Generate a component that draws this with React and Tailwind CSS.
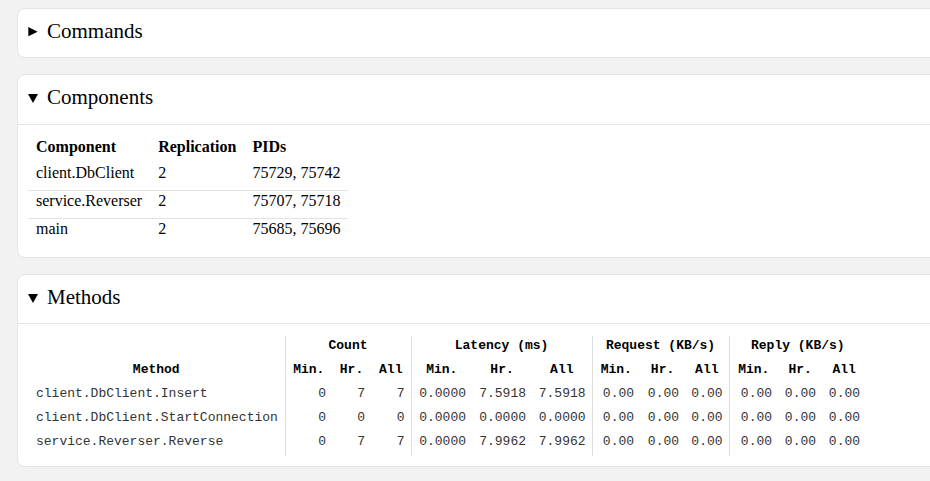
import React from 'react';

const components = [
    { name: 'client.DbClient', replication: 2, pids: '75729, 75742' },
    { name: 'service.Reverser', replication: 2, pids: '75707, 75718' },
    { name: 'main', replication: 2, pids: '75685, 75696' },
];

const methods = [
    {
        name: 'client.DbClient.Insert',
        count: ['0', '7', '7'],
        latency: ['0.0000', '7.5918', '7.5918'],
        request: ['0.00', '0.00', '0.00'],
        reply: ['0.00', '0.00', '0.00'],
    },
    {
        name: 'client.DbClient.StartConnection',
        count: ['0', '0', '0'],
        latency: ['0.0000', '0.0000', '0.0000'],
        request: ['0.00', '0.00', '0.00'],
        reply: ['0.00', '0.00', '0.00'],
    },
    {
        name: 'service.Reverser.Reverse',
        count: ['0', '7', '7'],
        latency: ['0.0000', '7.9962', '7.9962'],
        request: ['0.00', '0.00', '0.00'],
        reply: ['0.00', '0.00', '0.00'],
    },
];

const groups = ['Count', 'Latency (ms)', 'Request (KB/s)', 'Reply (KB/s)'];
const groupKeys = ['count', 'latency', 'request', 'reply'];

function Panel({ title, open, headerClass, children }) {
    return (
        <details
            open={open}
            className="ml-[17px] mr-[-40px] mb-[16px] bg-white border border-[#e4e4e4] rounded-[8px]"
        >
            <summary
                className={
                    'flex items-start list-none [&::-webkit-details-marker]:hidden pt-[10px] pl-[10px] text-[21px] leading-[24px] text-black cursor-pointer ' +
                    headerClass +
                    (open ? ' border-b border-[#e4e4e4]' : '')
                }
                style={{ fontFamily: '"Liberation Serif", "Times New Roman", serif' }}
            >
                {open ? (
                    <svg width="10" height="9" viewBox="0 0 10 9" className="mt-[9px] mr-[9px] shrink-0">
                        <polygon points="0,0 10,0 5,9" fill="#000" />
                    </svg>
                ) : (
                    <svg width="10" height="10" viewBox="0 0 10 10" className="mt-[8px] mr-[9px] shrink-0">
                        <polygon points="0.3,0 9.7,4.65 0.3,9.3" fill="#000" />
                    </svg>
                )}
                <span>{title}</span>
            </summary>
            {children}
        </details>
    );
}

export default function App() {
    const cell = 'pt-[2px] pb-[7px] px-[6px] leading-[15px]';
    const sep = 'border-l border-[#dedede]';

    return (
        <div className="min-h-screen bg-[#f2f2f2] pt-[8px] pb-[8px] overflow-hidden">
            <Panel title="Commands" open={false} headerClass="h-[48px]" />

            <Panel title="Components" open headerClass="h-[50px]">
                <div
                    className="pt-[11px] px-[10px] pb-[11px] text-[16px] text-black"
                    style={{ fontFamily: '"Liberation Serif", "Times New Roman", serif' }}
                >
                    <table className="border-collapse">
                        <thead>
                            <tr>
                                <th className="text-left font-bold px-[8px] pt-[2px] pb-[7px] leading-[18px]">Component</th>
                                <th className="text-left font-bold px-[8px] pt-[2px] pb-[7px] leading-[18px]">Replication</th>
                                <th className="text-left font-bold px-[8px] pt-[2px] pb-[7px] leading-[18px]">PIDs</th>
                            </tr>
                        </thead>
                        <tbody>
                            {components.map((c, i) => (
                                <tr key={c.name} className={i > 0 ? 'border-t border-[#e2e2e2]' : ''}>
                                    <td className="px-[8px] pt-[1px] pb-[8px] leading-[18px]">{c.name}</td>
                                    <td className="px-[8px] pt-[1px] pb-[8px] leading-[18px]">{c.replication}</td>
                                    <td className="px-[8px] pt-[1px] pb-[8px] leading-[18px]">{c.pids}</td>
                                </tr>
                            ))}
                        </tbody>
                    </table>
                </div>
            </Panel>

            <Panel title="Methods" open headerClass="h-[49px]">
                <div
                    className="pt-[12px] px-[10px] pb-[10px] text-[13px] text-[#333]"
                    style={{ fontFamily: '"Liberation Mono", "Courier New", monospace' }}
                >
                    <table className="border-collapse table-fixed w-[838px]">
                        <colgroup>
                            <col className="w-[257px]" />
                            <col className="w-[47px]" />
                            <col className="w-[39px]" />
                            <col className="w-[40px]" />
                            <col className="w-[61px]" />
                            <col className="w-[60px]" />
                            <col className="w-[60px]" />
                            <col className="w-[48px]" />
                            <col className="w-[45px]" />
                            <col className="w-[44px]" />
                            <col className="w-[49px]" />
                            <col className="w-[44px]" />
                            <col className="w-[44px]" />
                        </colgroup>
                        <thead>
                            <tr>
                                <th className={cell}></th>
                                {groups.map(g => (
                                    <th key={g} colSpan={3} className={`${cell} ${sep} text-center font-bold text-black`}>
                                        {g}
                                    </th>
                                ))}
                            </tr>
                            <tr>
                                <th className={`${cell} text-center font-bold text-black`}>Method</th>
                                {groups.map(g => (
                                    <React.Fragment key={g}>
                                        <th className={`${cell} ${sep} text-center font-bold text-black`}>Min.</th>
                                        <th className={`${cell} text-center font-bold text-black`}>Hr.</th>
                                        <th className={`${cell} text-center font-bold text-black`}>All</th>
                                    </React.Fragment>
                                ))}
                            </tr>
                        </thead>
                        <tbody>
                            {methods.map(m => (
                                <tr key={m.name}>
                                    <td className={`${cell} pl-[8px] text-left whitespace-nowrap`}>{m.name}</td>
                                    {groupKeys.map(k => (
                                        <React.Fragment key={k}>
                                            <td className={`${cell} ${sep} text-right`}>{m[k][0]}</td>
                                            <td className={`${cell} text-right`}>{m[k][1]}</td>
                                            <td className={`${cell} text-right`}>{m[k][2]}</td>
                                        </React.Fragment>
                                    ))}
                                </tr>
                            ))}
                        </tbody>
                    </table>
                </div>
            </Panel>
        </div>
    );
}
